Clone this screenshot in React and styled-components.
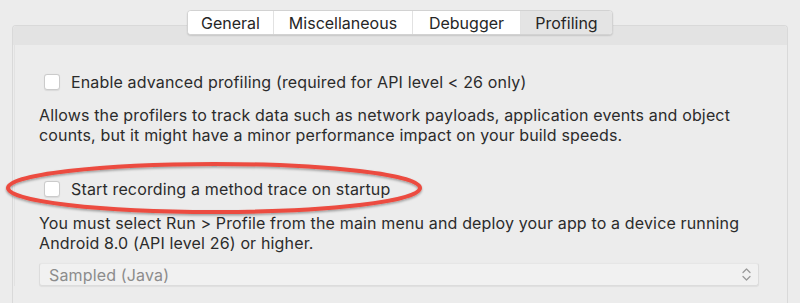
import React from "react";
import styled, { createGlobalStyle } from "styled-components";

const GlobalStyle = createGlobalStyle`
	html, body {
		margin: 0;
		padding: 0;
		background: #ececec;
	}
	body {
		font-family: Inter, "Liberation Sans", Arial, sans-serif;
		color: #2b2b2b;
		-webkit-font-smoothing: antialiased;
	}
`;

const Page = styled.div`
	width: 800px;
	height: 303px;
	overflow: hidden;
	padding: 10px 12px 0 12px;
	box-sizing: border-box;
`;

const TabBar = styled.div`
	position: relative;
	z-index: 2;
	display: flex;
	justify-content: center;
	margin-bottom: -10px;
`;

const Segmented = styled.div`
	display: flex;
	height: 23px;
	background: #ffffff;
	border: 1px solid #d2d2d2;
	border-radius: 4px;
	box-shadow: 0 1px 1.5px rgba(0, 0, 0, 0.12);
	overflow: hidden;
`;

const Tab = styled.div`
	display: flex;
	align-items: center;
	justify-content: center;
	width: ${({ $w }) => $w}px;
	font-size: 16px;
	color: #262626;
	background: ${({ $active }) => ($active ? "#e4e4e4" : "#ffffff")};
	border-left: ${({ $first }) => ($first ? "none" : "1px solid #e2e2e2")};
`;

const Panel = styled.div`
	border: 1px solid #d9d9d9;
	border-bottom: none;
	border-radius: 4px 4px 0 0;
	background: #ececec;
	height: 300px;
`;

const PanelTop = styled.div`
	height: 19px;
	background: #e3e3e3;
	border-radius: 4px 4px 0 0;
`;

const PanelBody = styled.div`
	margin-left: 1px;
	border-left: 1px solid #e2e2e2;
	padding: 29px 25px 0 24px;
	letter-spacing: 0.15px;
`;

const CheckRow = styled.label`
	position: relative;
	display: flex;
	align-items: center;
	gap: 11px;
	margin: ${({ $top }) => $top || 0}px 0 0 5px;
	height: 16px;
	font-size: 16px;
	color: #2b2b2b;
`;

const Box = styled.span`
	width: 14px;
	height: 14px;
	flex: none;
	background: #ffffff;
	border: 1px solid #cbcbcb;
	border-radius: 3px;
	box-shadow: 0 0.5px 1px rgba(0, 0, 0, 0.08);
`;

const Help = styled.p`
	margin: ${({ $top }) => $top}px 0 0 0;
	font-size: 16px;
	line-height: 20px;
	color: #2b2b2b;
	white-space: nowrap;
`;

const Mark = styled.svg`
	position: absolute;
	left: -40px;
	top: -21px;
	overflow: visible;
	pointer-events: none;
`;

const Select = styled.div`
	display: flex;
	align-items: center;
	justify-content: space-between;
	margin-top: 10px;
	height: 23px;
	width: 720px;
	box-sizing: border-box;
	padding: 0 7px 0 9px;
	background: #f1f1f1;
	border: 1px solid #dcdcdc;
	border-top-color: #e6e6e6;
	border-radius: 3px;
	box-shadow: 0 0.5px 1px rgba(0, 0, 0, 0.06);
	font-size: 16px;
	color: #8c8c8c;
`;

const Arrows = () => (
	<svg width="9" height="15" viewBox="0 0 9 15" fill="none">
		<path d="M1 5.5L4.5 2L8 5.5" stroke="#9a9a9a" strokeWidth="1.3" strokeLinecap="round" strokeLinejoin="round" />
		<path d="M1 9.5L4.5 13L8 9.5" stroke="#9a9a9a" strokeWidth="1.3" strokeLinecap="round" strokeLinejoin="round" />
	</svg>
);

const Ellipse = () => (
	<Mark width="420" height="56" viewBox="0 0 420 56">
		<defs>
			<filter id="sh" x="-5%" y="-30%" width="110%" height="160%">
				<feDropShadow dx="0" dy="1.5" stdDeviation="1.2" floodColor="#000" floodOpacity="0.35" />
			</filter>
		</defs>
		<ellipse cx="210" cy="28" rx="206" ry="24" stroke="#ec4b3f" strokeWidth="4" fill="none" filter="url(#sh)" />
	</Mark>
);

const tabs = [
	{ label: "General", w: 85 },
	{ label: "Miscellaneous", w: 138 },
	{ label: "Debugger", w: 107 },
	{ label: "Profiling", w: 91, active: true },
];

export default function App() {
	return (
		<>
			<GlobalStyle />
			<Page>
				<TabBar>
					<Segmented>
						{tabs.map((t, i) => (
							<Tab key={t.label} $w={t.w} $active={t.active} $first={i === 0}>
								{t.label}
							</Tab>
						))}
					</Segmented>
				</TabBar>
				<Panel>
					<PanelTop />
					<PanelBody>
						<CheckRow>
							<Box />
							Enable advanced profiling (required for API level &lt; 26 only)
						</CheckRow>
						<Help $top={15}>
							Allows the profilers to track data such as network payloads, application events and object
							<br />
							counts, but it might have a minor performance impact on your build speeds.
						</Help>
						<CheckRow $top={36}>
							<Ellipse />
							<Box />
							Start recording a method trace on startup
						</CheckRow>
						<Help $top={16}>
							You must select Run &gt; Profile from the main menu and deploy your app to a device running
							<br />
							Android 8.0 (API level 26) or higher.
						</Help>
						<Select>
							Sampled (Java)
							<Arrows />
						</Select>
					</PanelBody>
				</Panel>
			</Page>
		</>
	);
}
